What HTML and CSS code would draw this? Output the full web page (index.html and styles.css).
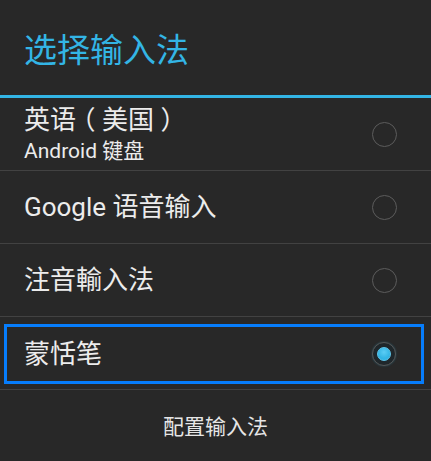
FILE: index.html
```
<!DOCTYPE html>
<html lang="zh-CN">

<head>
    <meta charset="UTF-8">
    <meta name="viewport" content="width=device-width, initial-scale=1.0">
    <title>选择输入法</title>
    <link rel="stylesheet" href="styles.css">
</head>

<body>
    <div class="dialog">
        <div class="dialog-title">选择输入法</div>
        <ul class="ime-list">
            <li class="ime-item">
                <div class="ime-label">
                    <div class="ime-name">英语<span class="paren">（</span>美国<span class="paren">）</span></div>
                    <div class="ime-sub">Android 键盘</div>
                </div>
                <span class="radio"></span>
            </li>
            <li class="ime-item">
                <div class="ime-label">
                    <div class="ime-name">Google 语音输入</div>
                </div>
                <span class="radio"></span>
            </li>
            <li class="ime-item">
                <div class="ime-label">
                    <div class="ime-name">注音輸入法</div>
                </div>
                <span class="radio"></span>
            </li>
            <li class="ime-item selected">
                <div class="ime-focus">
                    <div class="ime-label">
                        <div class="ime-name">蒙恬笔</div>
                    </div>
                    <span class="radio checked"></span>
                </div>
            </li>
        </ul>
        <div class="dialog-button">配置输入法</div>
    </div>
</body>

</html>
```

FILE: styles.css
```
body {
    margin: 0;
    padding: 0;
    background-color: #282828;
    font-family: Roboto, "Noto Sans CJK SC", sans-serif;
    color: #ececec;
}

.dialog {
    width: 431px;
    height: 461px;
    overflow: hidden;
}

.dialog-title {
    height: 95px;
    display: flex;
    align-items: center;
    padding-left: 24px;
    font-size: 33px;
    color: #33b5e5;
    border-bottom: 3px solid #33b5e5;
}

.ime-list {
    list-style: none;
    margin: 0;
    padding: 0;
}

.ime-item {
    height: 72px;
    display: flex;
    align-items: center;
    justify-content: space-between;
    padding: 0 34px 0 24px;
    border-bottom: 1px solid #424242;
}

.ime-name {
    font-size: 26px;
    line-height: 30px;
}

/* 全形括號置中 */
.paren {
    font-feature-settings: "halt";
    margin: 0 0.25em;
}

.ime-sub {
    font-size: 21px;
    line-height: 26px;
    margin-top: 3px;
}

.radio {
    width: 23px;
    height: 23px;
    border: 1.5px solid #5c5c5c;
    border-radius: 50%;
    flex-shrink: 0;
}

/* 選中項的焦點框 */
.ime-item.selected {
    padding: 7px 7px 5px 4px;
    height: 73px;
    box-sizing: border-box;
    align-items: stretch;
}

.ime-focus {
    flex: 1;
    display: flex;
    align-items: center;
    justify-content: space-between;
    border: 3px solid #067dfc;
    padding: 0 25px 0 17px;
}

.radio.checked {
    width: 22px;
    height: 22px;
    display: flex;
    align-items: center;
    justify-content: center;
    background-color: #1f272b;
    border-color: #565656;
    box-shadow: 0 0 2px rgb(51 181 229 / 30%);
}

.radio.checked::after {
    content: "";
    width: 14px;
    height: 14px;
    border-radius: 50%;
    box-sizing: border-box;
    background: radial-gradient(circle at 50% 35%, #5ccdf5, #33b5e5 60%);
    border: 1px solid #5fc6ec;
}

.dialog-button {
    height: 70px;
    display: flex;
    align-items: center;
    justify-content: center;
    font-size: 21px;
    color: #e6e6e6;
}
```
